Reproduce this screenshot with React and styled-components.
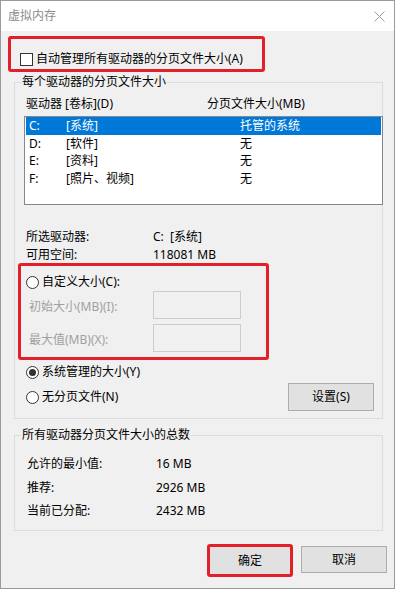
import React from 'react'
import styled, { createGlobalStyle } from 'styled-components'

const GlobalStyle = createGlobalStyle`
  html, body {
    margin: 0;
    padding: 0;
    background: #ffffff;
  }
  body {
    font-family: "Noto Sans", "Noto Sans CJK SC", sans-serif;
    font-size: 12px;
    color: #000;
  }
`

const drives = [
  { letter: 'C:', label: '[系统]', size: '托管的系统', selected: true },
  { letter: 'D:', label: '[软件]', size: '无' },
  { letter: 'E:', label: '[资料]', size: '无' },
  { letter: 'F:', label: '[照片、视频]', size: '无' },
]

const totals = [
  { label: '允许的最小值:', value: '16 MB' },
  { label: '推荐:', value: '2926 MB' },
  { label: '当前已分配:', value: '2432 MB' },
]

const App = () => {
  return (
    <>
      <GlobalStyle />
      <Window>
        <TitleBar>
          <Title>虚拟内存</Title>
          <CloseIcon viewBox="0 0 11 11" width="11" height="11">
            <line x1="0.5" y1="0.5" x2="10.5" y2="10.5" />
            <line x1="10.5" y1="0.5" x2="0.5" y2="10.5" />
          </CloseIcon>
        </TitleBar>
        <Body>
          <AutoBox>
            <CheckRow>
              <CheckBox />
              <span>自动管理所有驱动器的分页文件大小(A)</span>
            </CheckRow>
          </AutoBox>

          <Group $height={345}>
            <Legend>每个驱动器的分页文件大小</Legend>
            <GroupInner $top={6}>
              <HeaderRow>
                <span>驱动器 [卷标](D)</span>
                <span>分页文件大小(MB)</span>
              </HeaderRow>
              <ListBox>
                {drives.map((d) => (
                  <DriveRow key={d.letter} $selected={d.selected}>
                    <span>{d.letter}</span>
                    <span>{d.label}</span>
                    <span>{d.size}</span>
                  </DriveRow>
                ))}
              </ListBox>
              <InfoGrid>
                <span>所选驱动器:</span>
                <span>C:&nbsp;&nbsp;[系统]</span>
                <span>可用空间:</span>
                <span>118081 MB</span>
              </InfoGrid>
              <CustomBox>
                <RadioRow>
                  <Radio />
                  <span>自定义大小(C):</span>
                </RadioRow>
                <FieldRow $top={1}>
                  <FieldLabel>初始大小(MB)(I):</FieldLabel>
                  <SizeInput />
                </FieldRow>
                <FieldRow $top={5}>
                  <FieldLabel>最大值(MB)(X):</FieldLabel>
                  <SizeInput />
                </FieldRow>
              </CustomBox>
              <RadioRow $top={4} $left={2}>
                <Radio $checked />
                <span>系统管理的大小(Y)</span>
              </RadioRow>
              <NoPageRow>
                <RadioRow $left={2}>
                  <Radio />
                  <span>无分页文件(N)</span>
                </RadioRow>
                <Button>设置(S)</Button>
              </NoPageRow>
            </GroupInner>
          </Group>

          <Group $height={104} $top={8}>
            <Legend>所有驱动器分页文件大小的总数</Legend>
            <GroupInner $top={13}>
              <TotalsGrid>
                {totals.map((t) => (
                  <React.Fragment key={t.label}>
                    <span>{t.label}</span>
                    <span>{t.value}</span>
                  </React.Fragment>
                ))}
              </TotalsGrid>
            </GroupInner>
          </Group>

          <Footer>
            <Button $highlight>确定</Button>
            <Button $footer>取消</Button>
          </Footer>
        </Body>
      </Window>
    </>
  )
}

export default App

const Window = styled.div`
  width: 395px;
  height: 589px;
  box-sizing: border-box;
  border: 1px solid #9a9a9a;
  display: flex;
  flex-direction: column;
  background: #f0f0f0;
`

const TitleBar = styled.div`
  height: 30px;
  background: #ffffff;
  display: flex;
  align-items: center;
  justify-content: space-between;
  padding: 0 9px 0 7px;
  flex-shrink: 0;
`

const Title = styled.span`
  color: #8a8a8a;
  font-size: 12px;
  line-height: 16px;
`

const CloseIcon = styled.svg`
  stroke: #9a9a9a;
  stroke-width: 1;
  fill: none;
`

const Body = styled.div`
  flex: 1;
  display: flex;
  flex-direction: column;
  background: #f0f0f0;
  line-height: 16px;
`

const AutoBox = styled.div`
  margin: 5px 0 0 7px;
  width: 257px;
  height: 36px;
  box-sizing: border-box;
  border: 3px solid #e3202a;
  border-radius: 3px;
  padding: 10px 0 0 9px;
  display: flex;
  align-items: center;
`

const CheckRow = styled.label`
  display: flex;
  align-items: center;
  gap: 3px;
`

const CheckBox = styled.span`
  width: 13px;
  height: 13px;
  box-sizing: border-box;
  border: 1px solid #333333;
  background: #ffffff;
  display: inline-block;
`

const Group = styled.fieldset`
  margin: ${(p) => p.$top || 2}px 0 0 13px;
  width: 369px;
  height: ${(p) => p.$height}px;
  box-sizing: border-box;
  border: 1px solid #dcdcdc;
  padding: 0;
  min-width: 0;
`

const Legend = styled.legend`
  margin-left: 6px;
  padding: 0 1px;
  line-height: 16px;
  font-size: 12px;
`

const GroupInner = styled.div`
  padding: ${(p) => p.$top}px 0 0 9px;
  display: flex;
  flex-direction: column;
`

const HeaderRow = styled.div`
  display: grid;
  grid-template-columns: 181px auto;
  padding-left: 2px;
  height: 16px;
`

const ListBox = styled.div`
  margin-top: 4px;
  width: 359px;
  height: 89px;
  box-sizing: border-box;
  border: 1px solid #828790;
  background: #ffffff;
  padding: 0 1px;
`

const DriveRow = styled.div`
  display: grid;
  grid-template-columns: 37px 174px auto;
  height: 17.5px;
  line-height: 17px;
  padding-left: 3px;
  background: ${(p) => (p.$selected ? '#0078d7' : 'transparent')};
  color: ${(p) => (p.$selected ? '#ffffff' : '#000000')};
`

const InfoGrid = styled.div`
  margin-top: 24px;
  display: grid;
  grid-template-columns: 127px auto;
  row-gap: 2px;
  padding-left: 2px;
`

const CustomBox = styled.div`
  margin-left: -6px;
  width: 251px;
  height: 97px;
  box-sizing: border-box;
  border: 3px solid #e3202a;
  border-radius: 3px;
  padding: 8px 0 0 5px;
  display: flex;
  flex-direction: column;
`

const RadioRow = styled.label`
  display: flex;
  align-items: center;
  gap: 3px;
  height: 16px;
  margin-top: ${(p) => p.$top || 0}px;
  margin-left: ${(p) => p.$left || 0}px;
`

const Radio = styled.span`
  width: 13px;
  height: 13px;
  box-sizing: border-box;
  border: 1px solid #333333;
  border-radius: 50%;
  background: #ffffff;
  display: inline-flex;
  align-items: center;
  justify-content: center;
  &::after {
    content: '';
    width: 7px;
    height: 7px;
    border-radius: 50%;
    background: #333333;
    display: ${(p) => (p.$checked ? 'block' : 'none')};
  }
`

const FieldRow = styled.div`
  display: grid;
  grid-template-columns: 127px 88px;
  align-items: center;
  margin-top: ${(p) => p.$top}px;
`

const FieldLabel = styled.span`
  color: #a0a0a0;
  padding: 3px 0 0 3px;
`

const SizeInput = styled.div`
  height: 28px;
  box-sizing: border-box;
  border: 1px solid #cccccc;
  background: #f0f0f0;
`

const NoPageRow = styled.div`
  display: flex;
  align-items: center;
  justify-content: space-between;
  margin-top: 3px;
  padding-right: 8px;
`

const Button = styled.div`
  width: 86px;
  height: ${(p) => (p.$highlight ? 33 : p.$footer ? 27 : 28)}px;
  box-sizing: border-box;
  border: ${(p) => (p.$highlight ? '3px solid #e3202a' : '1px solid #adadad')};
  border-radius: ${(p) => (p.$highlight ? '3px' : '0')};
  margin-top: ${(p) => (p.$footer ? 2 : 0)}px;
  background: #e1e1e1;
  display: flex;
  align-items: center;
  justify-content: center;
`

const TotalsGrid = styled.div`
  display: grid;
  grid-template-columns: 129px auto;
  row-gap: 7.5px;
  padding-left: 3px;
`

const Footer = styled.div`
  display: flex;
  justify-content: flex-end;
  align-items: flex-start;
  gap: 8px;
  margin-top: 13px;
  padding-right: 7px;
`
